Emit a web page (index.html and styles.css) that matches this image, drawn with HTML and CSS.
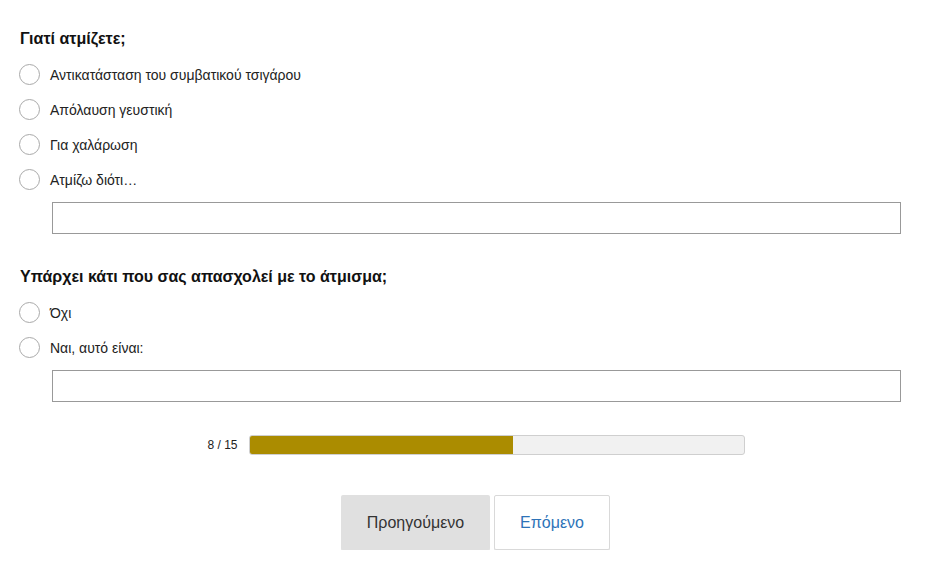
FILE: index.html
```html
<!DOCTYPE html>
<html lang="el">
<head>
<meta charset="utf-8">
<title>Ερωτηματολόγιο</title>
<link rel="stylesheet" href="styles.css">
</head>
<body>
<main class="survey">
  <section class="question">
    <h2 class="q-title">Γιατί ατμίζετε;</h2>
    <label class="option"><input type="radio" name="q1" class="radio"><span>Αντικατάσταση του συμβατικού τσιγάρου</span></label>
    <label class="option"><input type="radio" name="q1" class="radio"><span>Απόλαυση γευστική</span></label>
    <label class="option"><input type="radio" name="q1" class="radio"><span>Για χαλάρωση</span></label>
    <label class="option"><input type="radio" name="q1" class="radio"><span>Ατμίζω διότι…</span></label>
    <input type="text" class="text-field">
  </section>
  <section class="question second">
    <h2 class="q-title">Υπάρχει κάτι που σας απασχολεί με το άτμισμα;</h2>
    <label class="option"><input type="radio" name="q2" class="radio"><span>Όχι</span></label>
    <label class="option"><input type="radio" name="q2" class="radio"><span>Ναι, αυτό είναι:</span></label>
    <input type="text" class="text-field">
  </section>
  <div class="progress">
    <span class="progress-label">8 / 15</span>
    <div class="progress-track"><div class="progress-fill" style="width: 53.33%"></div></div>
  </div>
  <div class="nav">
    <button class="btn btn-prev">Προηγούμενο</button>
    <button class="btn btn-next">Επόμενο</button>
  </div>
</main>
</body>
</html>
```
FILE: styles.css
```css
html, body {
  margin: 0;
  padding: 0;
  background: #ffffff;
}
body {
  font-family: "Liberation Sans", Arial, sans-serif;
  color: #111;
}
.survey {
  padding: 29px 47px 0 19px;
}
.question {
  display: flex;
  flex-direction: column;
}
.question.second {
  margin-top: 33px;
}
.q-title {
  margin: 0 0 8px 1px;
  font-size: 16px;
  line-height: 20px;
  font-weight: bold;
  color: #111;
}
.option {
  display: flex;
  align-items: center;
  height: 35px;
  gap: 10px;
  font-size: 14px;
  color: #222;
  cursor: pointer;
}
.radio {
  appearance: none;
  -webkit-appearance: none;
  margin: 0;
  width: 21px;
  height: 21px;
  border: 1px solid #a9a9a9;
  border-radius: 50%;
  background: #fff;
  box-sizing: border-box;
  flex: none;
}
.text-field {
  margin: 5px 0 0 33px;
  height: 32px;
  box-sizing: border-box;
  border: 1px solid #999;
  border-radius: 0;
  padding: 0 8px;
  font-size: 14px;
  font-family: inherit;
  outline: none;
}
.progress {
  display: flex;
  align-items: center;
  justify-content: center;
  gap: 11px;
  margin-top: 33px;
  padding-left: 32px;
}
.progress-label {
  font-size: 12px;
  color: #222;
}
.progress-track {
  width: 496px;
  height: 20px;
  box-sizing: border-box;
  border: 1px solid #cfcfcf;
  border-radius: 3px;
  background: #f1f1f1;
  overflow: hidden;
}
.progress-fill {
  height: 100%;
  background: #ab8c00;
}
.nav {
  display: flex;
  justify-content: center;
  gap: 4px;
  margin-top: 40px;
  padding-left: 31px;
}
.btn {
  height: 55px;
  box-sizing: border-box;
  font-family: inherit;
  font-size: 16px;
  border-radius: 2px;
  cursor: pointer;
  box-shadow: 0 2px 0 #e8e8e8;
}
.btn-prev {
  width: 149px;
  background: #e0e0e0;
  border: none;
  color: #333;
}
.btn-next {
  width: 116px;
  background: #fff;
  border: 1px solid #d9d9d9;
  color: #2d73b8;
}
```
